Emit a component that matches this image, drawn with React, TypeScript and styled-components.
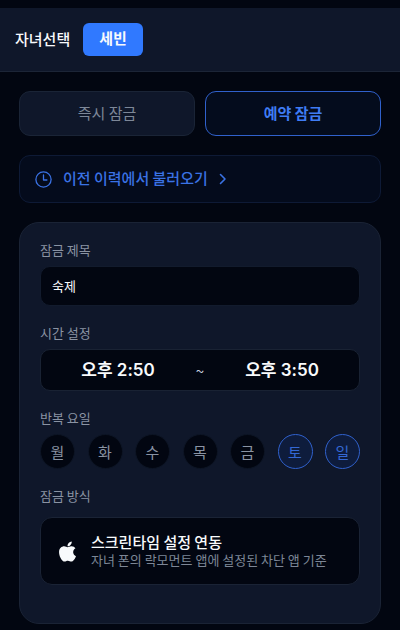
import React, { useState } from "react";
import styled, { createGlobalStyle } from "styled-components";
import { FaApple } from "react-icons/fa";

const GlobalStyle = createGlobalStyle`
  *, *::before, *::after { box-sizing: border-box; }
  body {
    margin: 0;
    background: #020611;
    color: #f8fafc;
    font-family: "Noto Sans CJK KR", "Noto Sans", sans-serif;
  }
  button, input { font: inherit; color: inherit; margin: 0; }
  button { cursor: pointer; }
`;

const Screen = styled.div`
  padding: 8px 0 6px;
`;

const Header = styled.header`
  display: flex;
  align-items: center;
  gap: 13px;
  height: 64px;
  padding: 0 15px 1px;
  background: #0f172a;
  border-bottom: 1px solid #1c2537;
`;

const HeaderLabel = styled.span`
  font-size: 15px;
  line-height: 20px;
  font-weight: 500;
`;

const ChildButton = styled.button`
  height: 33px;
  padding: 0 16px 2px;
  border: 0;
  border-radius: 6px;
  background: #3079ff;
  font-size: 15px;
  line-height: 20px;
  font-weight: 700;
`;

const Content = styled.main`
  display: flex;
  flex-direction: column;
  gap: 19px;
  padding: 19px 19px 0;
`;

const Tabs = styled.div`
  display: grid;
  grid-template-columns: 1fr 1fr;
  gap: 10px;
`;

const Tab = styled.button<{ $active: boolean }>`
  height: 45px;
  padding: 0 0 2px;
  border: 1px solid ${(p) => (p.$active ? "#3061cc" : "#1a2436")};
  border-radius: 11px;
  background: ${(p) => (p.$active ? "#040c1d" : "#0f172a")};
  color: ${(p) => (p.$active ? "#3f7cf4" : "#7d8798")};
  font-size: 15px;
  line-height: 20px;
  font-weight: ${(p) => (p.$active ? 700 : 400)};
`;

const HistoryButton = styled.button`
  display: flex;
  align-items: center;
  gap: 11px;
  height: 48px;
  padding: 0 15px;
  border: 1px solid #0e1a36;
  border-radius: 11px;
  background: #040b1c;
  color: #3a72e4;
  font-size: 15px;
  line-height: 20px;
  font-weight: 500;
`;

const HistoryText = styled.span`
  padding-bottom: 2px;
`;

const Card = styled.section`
  padding: 17px 20px 38px;
  border: 1px solid #1a2335;
  border-radius: 20px;
  background: #0f172a;
`;

const Field = styled.div`
  display: flex;
  flex-direction: column;
  gap: 6px;

  & + & { margin-top: 17px; }
`;

const FieldLabel = styled.label`
  color: #8a93a3;
  font-size: 13px;
  line-height: 20px;
`;

const GroupLabel = styled(FieldLabel).attrs({ as: "div" })``;

const TitleInput = styled.input`
  width: 100%;
  height: 40px;
  padding: 0 11px 2px;
  border: 1px solid #121b2d;
  border-radius: 10px;
  background: #020611;
  font-size: 13px;
  line-height: 20px;
  outline: none;
`;

const TimeRange = styled.div`
  display: grid;
  grid-template-columns: 1fr 10px 1fr;
  align-items: center;
  height: 42px;
  border: 1px solid #192233;
  border-radius: 10px;
  background: #020611;
  color: #cbd5e1;
  text-align: center;
  font-size: 15px;
`;

const TimeButton = styled.button`
  height: 40px;
  padding: 0;
  border: 0;
  background: transparent;
  color: #f8fafc;
  font-family: Inter, "Noto Sans CJK KR", sans-serif;
  font-size: 17px;
  line-height: 24px;
  font-weight: 600;
`;

const Days = styled.div`
  display: flex;
  justify-content: space-between;
`;

const Day = styled.button<{ $on: boolean }>`
  width: 35px;
  height: 35px;
  padding: 0;
  border: 1px solid ${(p) => (p.$on ? "#3061cc" : "#0d1525")};
  border-radius: 50%;
  background: ${(p) => (p.$on ? "#0e1c3c" : "#020611")};
  color: ${(p) => (p.$on ? "#3468d4" : "#8a93a3")};
  font-size: 15px;
  line-height: 20px;
`;

const MethodButton = styled.button`
  display: flex;
  align-items: center;
  gap: 12px;
  width: 100%;
  min-height: 68px;
  margin-top: 5px;
  padding: 0 15px;
  border: 1px solid #1a2335;
  border-radius: 12px;
  background: #020611;
  text-align: left;
`;

const MethodText = styled.span`
  display: flex;
  flex-direction: column;
`;

const MethodTitle = styled.strong`
  font-size: 15px;
  line-height: 18px;
  font-weight: 500;
`;

const MethodNote = styled.span`
  color: #7d8696;
  font-size: 13px;
  line-height: 18px;
`;

const ClockIcon = () => (
  <svg width="17" height="17" viewBox="0 0 17 17" fill="none" stroke="currentColor" strokeWidth="1.3" strokeLinecap="round" strokeLinejoin="round" aria-hidden="true">
    <circle cx="8.5" cy="8.5" r="7.6" />
    <path d="M8.5 4v5h3.4" />
  </svg>
);

const ChevronIcon = () => (
  <svg width="8" height="12" viewBox="0 0 8 12" fill="none" stroke="currentColor" strokeWidth="1.6" strokeLinecap="round" strokeLinejoin="round" aria-hidden="true">
    <path d="M1.5 1.5 6 6 1.5 10.5" />
  </svg>
);

const dayNames = ["월", "화", "수", "목", "금", "토", "일"];

export default function App() {
  const [mode, setMode] = useState("reserved");
  const [title, setTitle] = useState("숙제");
  const [days, setDays] = useState(["토", "일"]);

  const toggleDay = (day: string) =>
    setDays((current) =>
      current.includes(day) ? current.filter((d) => d !== day) : [...current, day]
    );

  return (
    <>
      <GlobalStyle />
      <Screen>
        <Header>
          <HeaderLabel>자녀선택</HeaderLabel>
          <ChildButton type="button">세빈</ChildButton>
        </Header>
        <Content>
          <Tabs>
            <Tab type="button" $active={mode === "now"} aria-pressed={mode === "now"} onClick={() => setMode("now")}>
              즉시 잠금
            </Tab>
            <Tab type="button" $active={mode === "reserved"} aria-pressed={mode === "reserved"} onClick={() => setMode("reserved")}>
              예약 잠금
            </Tab>
          </Tabs>
          <HistoryButton type="button">
            <ClockIcon />
            <HistoryText>이전 이력에서 불러오기</HistoryText>
            <ChevronIcon />
          </HistoryButton>
          <Card>
            <Field>
              <FieldLabel htmlFor="lock-title">잠금 제목</FieldLabel>
              <TitleInput id="lock-title" value={title} onChange={(e) => setTitle(e.target.value)} />
            </Field>
            <Field role="group" aria-labelledby="time-label">
              <GroupLabel id="time-label">시간 설정</GroupLabel>
              <TimeRange>
                <TimeButton type="button">오후 2:50</TimeButton>
                <span>~</span>
                <TimeButton type="button">오후 3:50</TimeButton>
              </TimeRange>
            </Field>
            <Field role="group" aria-labelledby="days-label">
              <GroupLabel id="days-label">반복 요일</GroupLabel>
              <Days>
                {dayNames.map((day) => (
                  <Day key={day} type="button" $on={days.includes(day)} aria-pressed={days.includes(day)} onClick={() => toggleDay(day)}>
                    {day}
                  </Day>
                ))}
              </Days>
            </Field>
            <Field role="group" aria-labelledby="method-label">
              <GroupLabel id="method-label">잠금 방식</GroupLabel>
              <MethodButton type="button">
                <FaApple size={23} aria-hidden="true" />
                <MethodText>
                  <MethodTitle>스크린타임 설정 연동</MethodTitle>
                  <MethodNote>자녀 폰의 락모먼트 앱에 설정된 차단 앱 기준</MethodNote>
                </MethodText>
              </MethodButton>
            </Field>
          </Card>
        </Content>
      </Screen>
    </>
  );
}
